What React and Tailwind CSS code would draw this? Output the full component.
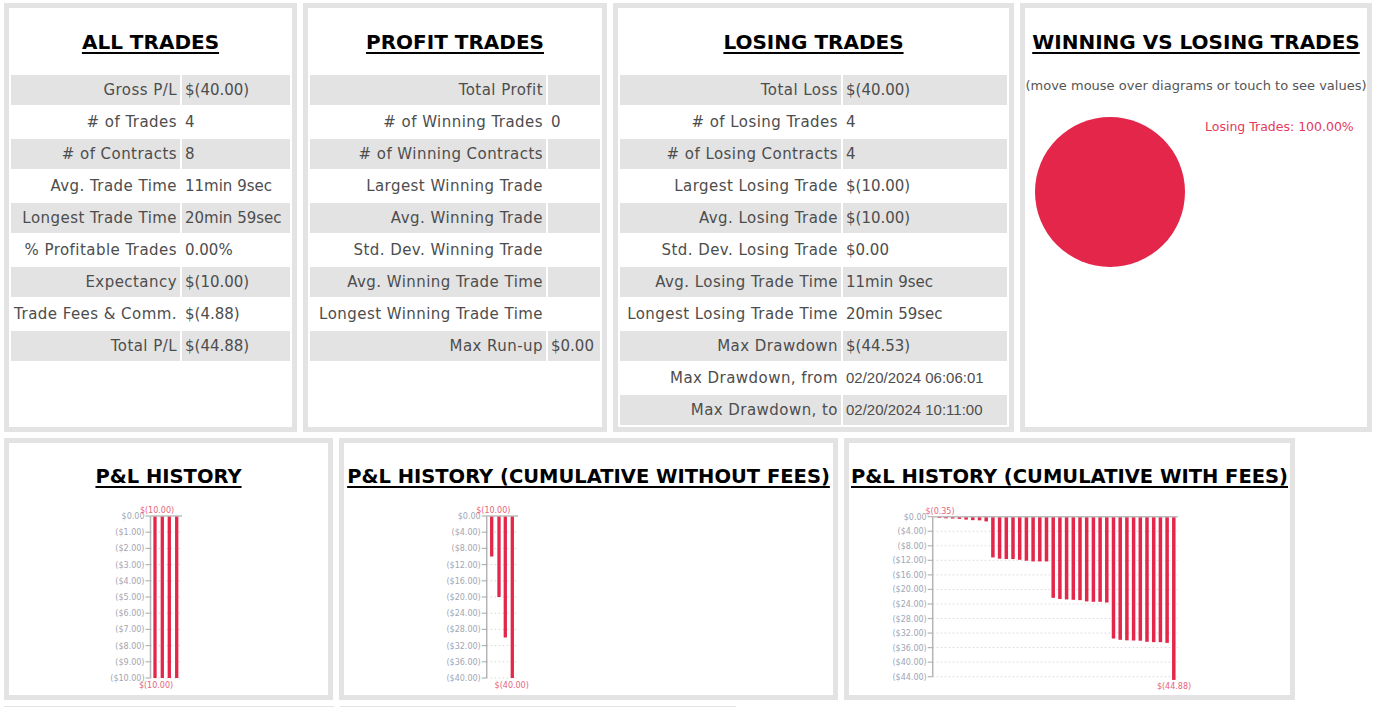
import React from "react";

const allTrades = [
  ["Gross P/L", "$(40.00)"],
  ["# of Trades", "4"],
  ["# of Contracts", "8"],
  ["Avg. Trade Time", "11min 9sec"],
  ["Longest Trade Time", "20min 59sec"],
  ["% Profitable Trades", "0.00%"],
  ["Expectancy", "$(10.00)"],
  ["Trade Fees & Comm.", "$(4.88)"],
  ["Total P/L", "$(44.88)"],
];

const profitTrades = [
  ["Total Profit", ""],
  ["# of Winning Trades", "0"],
  ["# of Winning Contracts", ""],
  ["Largest Winning Trade", ""],
  ["Avg. Winning Trade", ""],
  ["Std. Dev. Winning Trade", ""],
  ["Avg. Winning Trade Time", ""],
  ["Longest Winning Trade Time", ""],
  ["Max Run-up", "$0.00"],
];

const losingTrades = [
  ["Total Loss", "$(40.00)"],
  ["# of Losing Trades", "4"],
  ["# of Losing Contracts", "4"],
  ["Largest Losing Trade", "$(10.00)"],
  ["Avg. Losing Trade", "$(10.00)"],
  ["Std. Dev. Losing Trade", "$0.00"],
  ["Avg. Losing Trade Time", "11min 9sec"],
  ["Longest Losing Trade Time", "20min 59sec"],
  ["Max Drawdown", "$(44.53)"],
  ["Max Drawdown, from", "02/20/2024 06:06:01", true],
  ["Max Drawdown, to", "02/20/2024 10:11:00", true],
];

// cumulative P&L with fees, one bar per fill
const withFees = [
  -0.35, -0.45, -0.5, -0.6, -0.8, -0.95, -1.0, -1.3,
  -11.2, -11.55, -11.65, -11.65, -11.85, -12.1, -12.3, -12.3, -12.3,
  -22.3, -22.65, -22.75, -22.85, -22.95, -23.3, -23.4, -23.4, -23.6,
  -33.5, -33.85, -34.0, -34.05, -34.1, -34.4, -34.5, -34.5, -34.7,
  -44.88,
];

function Title({ children, small }) {
  return (
    <h2
      className={
        small
          ? "text-center text-[19.5px] leading-[24px] font-bold text-black underline decoration-2 underline-offset-[3px] whitespace-nowrap"
          : "text-center text-[20px] leading-[24px] font-bold text-black underline decoration-2 underline-offset-[3px] whitespace-nowrap"
      }
    >
      {children}
    </h2>
  );
}

function StatTable({ rows, labelW, valueW }) {
  return (
    <table className="w-full table-fixed border-separate border-spacing-[2px] mt-[19px] text-[15px] text-[#4d4d4d]">
      <colgroup>
        <col className={labelW} />
        <col className={valueW} />
      </colgroup>
      <tbody>
        {rows.map(([label, value, date], i) => (
          <tr key={label} className={i % 2 === 0 ? "bg-[#e3e3e3]" : ""}>
            <td className="h-[30px] pr-[3px] pl-0 text-right whitespace-nowrap tracking-[0.45px]">{label}</td>
            <td
              className={
                date
                  ? "h-[30px] pl-[3px] whitespace-nowrap font-['Liberation_Sans',sans-serif]"
                  : "h-[30px] pl-[3px] whitespace-nowrap"
              }
            >
              {value}
            </td>
          </tr>
        ))}
      </tbody>
    </table>
  );
}

function BarChart({ width, axisX, y0, y1, max, step, bars, barW = 3.3, gridRight, top, bottom }) {
  const ticks = [];
  for (let v = 0; v <= max; v += step) ticks.push(v);
  const yOf = (v) => y0 + (Math.abs(v) / max) * (y1 - y0);
  return (
    <svg width={width} height="204" className="block">
      {ticks.map((v) => (
        <g key={v}>
          {v > 0 && (
            <line x1={axisX} x2={gridRight} y1={yOf(v)} y2={yOf(v)} stroke="#d6d6d6" strokeWidth="1" strokeDasharray="1.5 2.5" />
          )}
          <line x1={axisX - 5} x2={axisX} y1={yOf(v)} y2={yOf(v)} stroke="#b4b4b4" strokeWidth="1.2" />
          <text x={axisX - 6} y={yOf(v) + 3} fontSize="8" textAnchor="end" fill="#a0a6b4" fontFamily="DejaVu Sans, sans-serif">
            {v === 0 ? "$0.00" : `($${v.toFixed(2)})`}
          </text>
        </g>
      ))}
      {bars.map((b) => (
        <rect key={b.x} x={b.x - barW / 2} y={y0} width={barW} height={yOf(b.v) - y0} fill="#e4264a" />
      ))}
      <line x1={axisX} x2={axisX} y1={y0} y2={y1} stroke="#b4b4b4" strokeWidth="1.5" />
      <line x1={axisX} x2={gridRight} y1={y0} y2={y0} stroke="#bdbdbd" strokeWidth="1.5" />
      <text x={top.x} y={top.y} fontSize="8" textAnchor="middle" fill="#e8637c" fontFamily="DejaVu Sans, sans-serif">
        {top.text}
      </text>
      <text x={bottom.x} y={bottom.y} fontSize="8" textAnchor="middle" fill="#e8637c" fontFamily="DejaVu Sans, sans-serif">
        {bottom.text}
      </text>
    </svg>
  );
}

const card = "border-[5px] border-[#e3e3e3] bg-white pt-[22px] shrink-0";

export default function App() {
  return (
    <div className="min-h-screen bg-white pl-[4px] pt-[3px] flex flex-col gap-[6px] font-['DejaVu_Sans',sans-serif] overflow-hidden">
      {/* stats row */}
      <div className="flex gap-[6px]">
        <div className={`${card} w-[293px] h-[429px]`}>
          <Title>ALL TRADES</Title>
          <StatTable rows={allTrades} labelW="w-[169px]" valueW="w-[108px]" />
        </div>
        <div className={`${card} w-[304px] h-[429px]`}>
          <Title>PROFIT TRADES</Title>
          <StatTable rows={profitTrades} labelW="w-[236px]" valueW="w-[52px]" />
        </div>
        <div className={`${card} w-[401px] h-[429px]`}>
          <Title>LOSING TRADES</Title>
          <StatTable rows={losingTrades} labelW="w-[221px]" valueW="w-[164px]" />
        </div>
        <div className={`${card} w-[352px] h-[429px]`}>
          <Title>WINNING VS LOSING TRADES</Title>
          <p className="mt-[24px] text-center text-[13px] leading-[16px] text-[#555] whitespace-nowrap">
            (move mouse over diagrams or touch to see values)
          </p>
          <div className="flex items-start mt-[23px]">
            <svg width="150" height="150" className="ml-[10px] shrink-0">
              <circle cx="75" cy="75" r="75" fill="#e4264a" />
            </svg>
            <span className="ml-[20px] mt-[2px] text-[12.5px] leading-[16px] text-[#e33a5a] whitespace-nowrap">
              Losing Trades: 100.00%
            </span>
          </div>
        </div>
      </div>

      {/* chart row */}
      <div className="flex gap-[6px]">
        <div className={`${card} w-[329px] h-[262px]`}>
          <Title small>P&amp;L HISTORY</Title>
          <BarChart
            width={319}
            axisX={141.5}
            y0={27}
            y1={189}
            max={10}
            step={1}
            gridRight={173}
            bars={[
              { x: 146, v: -10 },
              { x: 153.3, v: -10 },
              { x: 160.3, v: -10 },
              { x: 167.7, v: -10 },
            ]}
            top={{ x: 148, y: 24, text: "$(10.00)" }}
            bottom={{ x: 147, y: 199, text: "$(10.00)" }}
          />
        </div>
        <div className={`${card} w-[499px] h-[262px]`}>
          <Title small>P&amp;L HISTORY (CUMULATIVE WITHOUT FEES)</Title>
          <BarChart
            width={489}
            axisX={142.7}
            y0={27}
            y1={189}
            max={40}
            step={4}
            gridRight={174}
            bars={[
              { x: 147.7, v: -10 },
              { x: 155, v: -20 },
              { x: 161.3, v: -30 },
              { x: 168.3, v: -40 },
            ]}
            top={{ x: 149.3, y: 24, text: "$(10.00)" }}
            bottom={{ x: 167.7, y: 199, text: "$(40.00)" }}
          />
        </div>
        <div className={`${card} w-[451px] h-[262px]`}>
          <Title small>P&amp;L HISTORY (CUMULATIVE WITH FEES)</Title>
          <BarChart
            width={441}
            axisX={83.7}
            y0={27.7}
            y1={187.7}
            max={44}
            step={4}
            barW={3.5}
            gridRight={328.7}
            bars={withFees.map((v, i) => ({ x: 90.3 + i * 6.7, v }))}
            top={{ x: 91, y: 25, text: "$(0.35)" }}
            bottom={{ x: 325, y: 200, text: "$(44.88)" }}
          />
        </div>
      </div>

      {/* next row, cut off by the window */}
      <div className="flex gap-[6px]">
        <div className="border-[5px] border-[#e3e3e3] bg-white w-[330px] h-[200px] shrink-0" />
        <div className="border-[5px] border-[#e3e3e3] bg-white w-[396px] h-[200px] shrink-0" />
      </div>
    </div>
  );
}
